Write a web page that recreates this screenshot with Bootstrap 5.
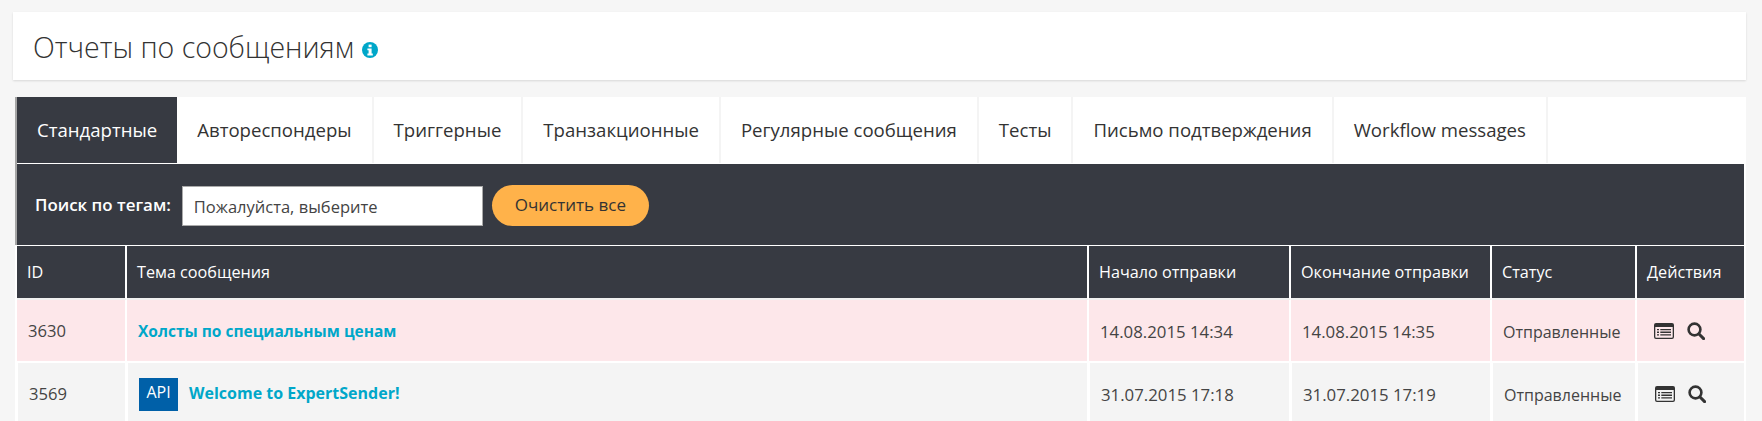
<!DOCTYPE html>
<html lang="ru">
<head>
  <meta charset="UTF-8" />
  <title>Отчеты по сообщениям</title>
  <link href="https://cdn.jsdelivr.net/npm/bootstrap@5.3.0/dist/css/bootstrap.min.css" rel="stylesheet" />
  <style>
    html, body { height: 421px; overflow: hidden; }
    body { background: #f6f6f6; font-family: "Open Sans", "Noto Sans", sans-serif; color: #444; padding: 12px 16px 0 13px; }

    .page-head { background: #fff; height: 68px; padding: 3px 0 0 20px; box-shadow: 0 1px 2px rgba(0,0,0,.12); margin-bottom: 17px; }
    .page-head h1 { font-size: 28.5px; font-weight: 300; color: #333; margin: 0; }
    .page-head svg { margin-top: 5px; }

    .report-box { background: #fff; border-left: 2px solid #f6f6f6; }
    .report-tabs { background: #fff; height: 67px; flex-wrap: nowrap; border-left: 2px solid #a5a5a5; }
    .report-tabs .nav-link { height: 66px; padding: 0 20px; border: 0; border-right: 2px solid #f4f4f4; border-radius: 0; font-size: 18.6px; color: #333; display: flex; align-items: center; white-space: nowrap; }
    .report-tabs .nav-link.active { background: #373a42; color: #fff; border-right: 0; }

    .tag-filter { background: #373a42; height: 81px; padding-left: 18px; border-left: 2px solid #a5a5a5; border-right: 2px solid #fff; color: #fff; }
    .tag-filter label { font-size: 16.9px; font-weight: 600; margin: 0 11px 0 0; }
    .tag-input { width: 301px; height: 40px; margin-top: 3px; border: 1px solid #aaa; border-radius: 0; font-size: 16.5px; color: #444; padding: 0 11px; }
    .tag-input::placeholder { color: #444; opacity: 1; }
    .clear-btn { background: #ffb24a; border: 0; border-radius: 21px; height: 41px; width: 157px; margin-left: 9px; margin-top: 1px; font-size: 17px; color: #333; padding: 0; }

    .msg-table { table-layout: fixed; width: 1729px; border-collapse: separate; border-spacing: 0; margin: 0 0 0 2px; }
    .msg-table th, .msg-table td { border: 0; vertical-align: middle; }
    .msg-table th { background: #373a42; color: #fff; font-size: 16.2px; font-weight: 400; height: 55px; padding: 0 6px 0 10px; border-right: 2px solid #fff; border-top: 1px solid #fff; border-bottom: 2px solid #f0f0f0; white-space: nowrap; }
    .msg-table td { font-size: 16px; color: #444; height: 63px; padding: 2px 0 0 11px; border-right: 2px solid #fff; border-bottom: 2px solid #fff; white-space: nowrap; }
    .msg-table tr.row-failed td { background: #fde7ea; }
    .msg-table tr.row-plain td { background: #f4f4f4; border-left: 1px solid #fff; }
    .msg-table td.cell-date { font-size: 16.8px; }
    .msg-table td.cell-id { font-size: 16.6px; }
    .col-id { width: 110px; }
    .col-subject { width: 962px; }
    .col-date { width: 202px; }
    .col-date-end { width: 201px; }
    .col-status { width: 145px; }
    .col-actions { width: 109px; }

    .msg-link { color: #00a7c9; font-weight: 700; font-size: 15.5px; text-decoration: none; }
    .msg-link-latin { font-size: 16px; }
    .api-mark { background: #0060a8; color: #fff; display: inline-flex; align-items: flex-start; justify-content: center; width: 39px; height: 33px; padding-top: 2px; font-size: 16px; margin-right: 11px; vertical-align: middle; }
    .act-icons { display: flex; gap: 13px; align-items: center; padding-left: 6px; margin-top: -2px; }
  </style>
</head>
<body>
  <div class="page-head d-flex align-items-center">
    <h1>Отчеты по сообщениям</h1>
    <svg width="16" height="16" viewBox="0 0 16 16" class="ms-2">
      <circle cx="8" cy="8" r="8" fill="#00a7c9" />
      <rect x="6.6" y="2.6" width="3" height="2.6" fill="#fff" />
      <path d="M5.4 6.4h4.2v5.2h1.2v1.8H5.4v-1.8h1.2V8.2H5.4z" fill="#fff" />
    </svg>
  </div>

  <div class="report-box">
    <ul class="nav report-tabs">
      <li class="nav-item"><a class="nav-link active" href="#">Стандартные</a></li>
      <li class="nav-item"><a class="nav-link" href="#">Автореспондеры</a></li>
      <li class="nav-item"><a class="nav-link" href="#">Триггерные</a></li>
      <li class="nav-item"><a class="nav-link" href="#">Транзакционные</a></li>
      <li class="nav-item"><a class="nav-link" href="#">Регулярные сообщения</a></li>
      <li class="nav-item"><a class="nav-link" href="#">Тесты</a></li>
      <li class="nav-item"><a class="nav-link" href="#">Письмо подтверждения</a></li>
      <li class="nav-item"><a class="nav-link" href="#">Workflow messages</a></li>
    </ul>

    <div class="tag-filter d-flex align-items-center">
      <label for="tags">Поиск по тегам:</label>
      <input id="tags" class="tag-input" type="text" placeholder="Пожалуйста, выберите" />
      <button class="btn clear-btn" type="button">Очистить все</button>
    </div>

    <table class="table msg-table">
      <thead>
        <tr>
          <th class="col-id">ID</th>
          <th class="col-subject">Тема сообщения</th>
          <th class="col-date">Начало отправки</th>
          <th class="col-date-end">Окончание отправки</th>
          <th class="col-status">Статус</th>
          <th class="col-actions">Действия</th>
        </tr>
      </thead>
      <tbody>
        <tr class="row-failed">
          <td class="cell-id">3630</td>
          <td><a class="msg-link" href="#">Холсты по специальным ценам</a></td>
          <td class="cell-date">14.08.2015 14:34</td>
          <td class="cell-date">14.08.2015 14:35</td>
          <td>Отправленные</td>
          <td>
            <div class="act-icons">
              <svg width="20" height="16" viewBox="0 0 20 16"><path fill-rule="evenodd" fill="#333" d="M2 0h16a2 2 0 0 1 2 2v12a2 2 0 0 1-2 2H2a2 2 0 0 1-2-2V2a2 2 0 0 1 2-2zM1.3 4v9.7c0 .6.4 1 1 1h15.4c.6 0 1-.4 1-1V4zM3 6h2v1.3H3zM6.3 6H17v1.3H6.3zM3 8.6h2v1.3H3zM6.3 8.6H17v1.3H6.3zM3 11.2h2v1.3H3zM6.3 11.2H17v1.3H6.3z" /></svg>
              <svg width="18" height="18" viewBox="0 0 18 18"><circle cx="7.5" cy="7.5" r="5.9" fill="none" stroke="#333" stroke-width="2.6" /><path d="M12 12l4.6 4.6" stroke="#333" stroke-width="3" stroke-linecap="round" /></svg>
            </div>
          </td>
        </tr>
        <tr class="row-plain">
          <td class="cell-id">3569</td>
          <td><span class="api-mark">API</span><a class="msg-link msg-link-latin" href="#">Welcome to ExpertSender!</a></td>
          <td class="cell-date">31.07.2015 17:18</td>
          <td class="cell-date">31.07.2015 17:19</td>
          <td>Отправленные</td>
          <td>
            <div class="act-icons">
              <svg width="20" height="16" viewBox="0 0 20 16"><path fill-rule="evenodd" fill="#333" d="M2 0h16a2 2 0 0 1 2 2v12a2 2 0 0 1-2 2H2a2 2 0 0 1-2-2V2a2 2 0 0 1 2-2zM1.3 4v9.7c0 .6.4 1 1 1h15.4c.6 0 1-.4 1-1V4zM3 6h2v1.3H3zM6.3 6H17v1.3H6.3zM3 8.6h2v1.3H3zM6.3 8.6H17v1.3H6.3zM3 11.2h2v1.3H3zM6.3 11.2H17v1.3H6.3z" /></svg>
              <svg width="18" height="18" viewBox="0 0 18 18"><circle cx="7.5" cy="7.5" r="5.9" fill="none" stroke="#333" stroke-width="2.6" /><path d="M12 12l4.6 4.6" stroke="#333" stroke-width="3" stroke-linecap="round" /></svg>
            </div>
          </td>
        </tr>
      </tbody>
    </table>
  </div>

  <script src="https://cdn.jsdelivr.net/npm/bootstrap@5.3.0/dist/js/bootstrap.bundle.min.js"></script>
</body>
</html>
